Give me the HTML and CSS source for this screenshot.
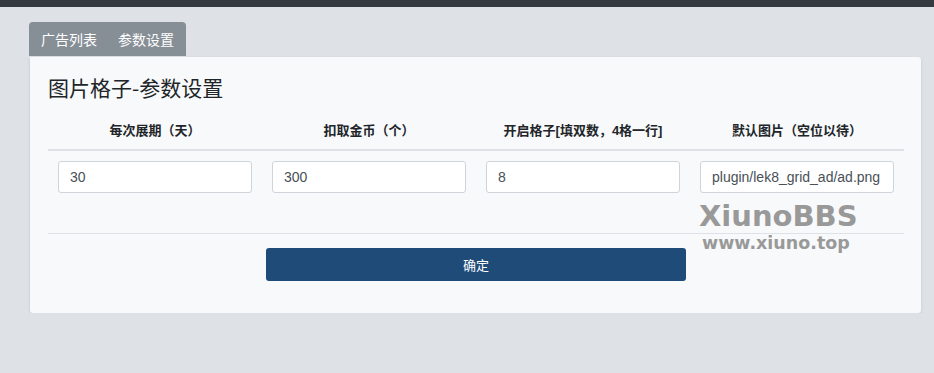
FILE: index.html
```html
<!DOCTYPE html>
<html lang="zh-CN">
<head>
    <meta charset="UTF-8">
    <meta name="viewport" content="width=device-width, initial-scale=1.0">
    <title>图片格子-参数设置</title>
    <link rel="stylesheet" href="styles.css">
</head>
<body>
    <div class="topbar"></div>
    <div class="main">
        <div class="tabs">
            <a href="#" class="tab">广告列表</a>
            <a href="#" class="tab">参数设置</a>
        </div>
        <div class="card">
            <h1 class="card-title">图片格子-参数设置</h1>
            <form id="settingForm">
                <table class="setting-table">
                    <thead>
                        <tr>
                            <th>每次展期（天）</th>
                            <th>扣取金币（个）</th>
                            <th>开启格子[填双数，4格一行]</th>
                            <th>默认图片（空位以待）</th>
                        </tr>
                    </thead>
                    <tbody>
                        <tr>
                            <td><input type="text" name="days" value="30"></td>
                            <td><input type="text" name="gold" value="300"></td>
                            <td><input type="text" name="grids" value="8"></td>
                            <td><input type="text" name="pic" value="plugin/lek8_grid_ad/ad.png"></td>
                        </tr>
                    </tbody>
                </table>
                <div class="form-footer">
                    <button type="submit">确定</button>
                </div>
            </form>
            <div class="watermark">
                <div class="wm-big">XiunoBBS</div>
                <div class="wm-small">www.xiuno.top</div>
            </div>
        </div>
    </div>
</body>
</html>
```

FILE: styles.css
```css
body {
    font-family: "Liberation Sans", "Noto Sans CJK SC", sans-serif;
    background-color: #dee2e6;
    color: #212529;
    margin: 0;
}


.topbar {
    height: 7px;
    background-color: #343a40;
}


.main {
    padding: 15px 13px 0 30px;
}


.tabs {
    display: inline-flex;
    height: 34px;
    align-items: center;
    background-color: #868e96;
    border-radius: 4px 4px 0 0;
    margin-left: -1px;
}

.tab {
    color: #fff;
    text-decoration: none;
    font-size: 14px;
    padding: 0 11px 0 12px;
}

.tab + .tab {
    padding: 0 12px 0 10px;
}


.card {
    position: relative;
    background-color: #f8f9fa;
    margin-top: 1px;
    padding: 18px 17px 32px 18px;
    border-radius: 0 3px 3px 3px;
    box-shadow: 0 1px 3px rgba(0,0,0,0.12);
}

.card-title {
    font-family: "Noto Sans CJK SC", sans-serif;
    font-size: 21px;
    font-weight: normal;
    line-height: 24px;
    margin: 0 0 14px;
}


.setting-table {
    width: 100%;
    border-collapse: collapse;
    table-layout: fixed;
}

.setting-table th {
    font-size: 13px;
    font-weight: bold;
    line-height: 20px;
    padding: 8px 10px;
    border-bottom: 2px solid #dee2e6;
    text-align: center;
}

.setting-table td {
    padding: 10px 10px 40px;
}

input[type="text"] {
    width: 100%;
    height: 32px;
    padding: 0 11px;
    border: 1px solid #ced4da;
    border-radius: 3px;
    background-color: #fff;
    color: #495057;
    font-family: "Liberation Sans", sans-serif;
    font-size: 14px;
    box-sizing: border-box;
}


.form-footer {
    border-top: 1px solid #dee2e6;
    padding-top: 14px;
    text-align: center;
}

button {
    width: 420px;
    height: 33px;
    background-color: #1f4b79;
    color: #fff;
    border: none;
    border-radius: 3px;
    font-family: "Noto Sans CJK SC", sans-serif;
    font-size: 13px;
    cursor: pointer;
}


.watermark {
    position: absolute;
    left: 669px;
    top: 142px;
    color: #999;
    font-family: "DejaVu Sans", sans-serif;
    font-weight: bold;
    pointer-events: none;
}

.wm-big {
    font-size: 29px;
    line-height: 34px;
}

.wm-small {
    font-size: 17.5px;
    line-height: 20px;
    margin-left: 3px;
}
```
